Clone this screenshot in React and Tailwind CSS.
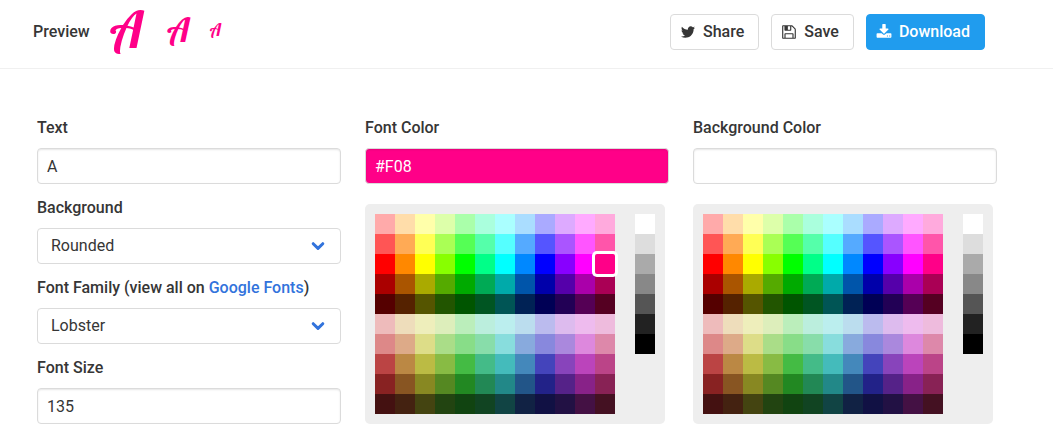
import { useState } from "react";

const HUES = [
  "FAA FDA FFA DFA AFA AFD AFF ADF AAF DAF FAF FAD",
  "F55 FA5 FF5 AF5 5F5 5FA 5FF 5AF 55F A5F F5F F5A",
  "F00 F80 FF0 8F0 0F0 0F8 0FF 08F 00F 80F F0F F08",
  "A00 A50 AA0 5A0 0A0 0A5 0AA 05A 00A 50A A0A A05",
  "500 520 550 250 050 052 055 025 005 205 505 502",
  "EBB EDB EEB DEB BEB BED BEE BDE BBE DBE EBE EBD",
  "D88 DA8 DD8 AD8 8D8 8DA 8DD 8AD 88D A8D D8D D8A",
  "B44 B84 BB4 8B4 4B4 4B8 4BB 48B 44B 84B B4B B48",
  "822 852 882 582 282 285 288 258 228 528 828 825",
  "411 421 441 241 141 142 144 124 114 214 414 412",
].flatMap((row) => row.split(" ").map((c) => "#" + c));

const GRAYS = ["#FFF", "#DDD", "#AAA", "#888", "#555", "#222", "#000"];

const ICONS = {
  twitter:
    "M1684 408q-67 98-162 167 1 14 1 42 0 130-38 259.5t-115.5 248.5-184.5 210.5-258 146-323 54.5q-271 0-496-145 35 4 78 4 225 0 401-138-105-2-188-64.5t-114-159.5q33 5 61 5 43 0 85-11-112-23-185.5-111.5t-73.5-205.5v-4q68 38 146 41-66-44-105-115t-39-154q0-88 44-163 121 149 294.5 238.5t371.5 99.5q-8-38-8-74 0-134 94.5-228.5t228.5-94.5q140 0 236 102 109-21 205-78-37 115-142 178 93-10 186-50z",
  save: "M512 1536h768v-384h-768v384zM1408 1536h128v-896q0-14-10-38.5t-20-34.5l-281-281q-10-10-34-20t-39-10v416q0 40-28 68t-68 28h-576q-40 0-68-28t-28-68v-416h-128v1280h128v-416q0-40 28-68t68-28h832q40 0 68 28t28 68v416zM1024 608v-320q0-13-9.500-22.500t-22.500-9.500h-192q-13 0-22.500 9.500t-9.500 22.500v320q0 13 9.500 22.500t22.500 9.500h192q13 0 22.500-9.500t9.500-22.500zM1664 640v928q0 40-28 68t-68 28h-1344q-40 0-68-28t-28-68v-1344q0-40 28-68t68-28h928q40 0 88 20t76 48l280 280q28 28 48 76t20 88z",
  download:
    "M1344 1344q0-26-19-45t-45-19-45 19-19 45 19 45 45 19 45-19 19-45zm256 0q0-26-19-45t-45-19-45 19-19 45 19 45 45 19 45-19 19-45zm128-224v320q0 40-28 68t-68 28h-1472q-40 0-68-28t-28-68v-320q0-40 28-68t68-28h465l135 136q58 56 136 56t136-56l136-136h464q40 0 68 28t28 68zm-325-569q17 41-14 70l-448 448q-18 19-45 19t-45-19l-448-448q-31-29-14-70 17-39 59-39h256v-448q0-26 19-45t45-19h256q26 0 45 19t19 45v448h256q42 0 59 39z",
};

function ActionButton({ icon, primary, children }) {
  const tone = primary
    ? "border-[#209cee] bg-[#209cee] text-white"
    : "border-[#dbdbdb] bg-white text-[#363636]";
  return (
    <button
      type="button"
      className={`flex h-9 items-center gap-[3px] rounded border pl-[5px] pr-3.5 font-medium ${tone}`}
    >
      <span className="flex w-6 justify-center">
        <svg viewBox="0 0 1792 1792" className="size-4 fill-current" aria-hidden="true">
          <path d={ICONS[icon]} />
        </svg>
      </span>
      {children}
    </button>
  );
}

const inputClass =
  "block h-9 w-full rounded border border-[#dbdbdb] px-[9px] shadow-[inset_0_1px_2px_rgba(10,10,10,0.1)] outline-none";

function Field({ id, label, children }) {
  return (
    <div>
      <label htmlFor={id} className="mb-2 block font-medium">
        {label}
      </label>
      {children}
    </div>
  );
}

function Select({ id, options }) {
  return (
    <div className="relative">
      <select
        id={id}
        className="block h-9 w-full appearance-none rounded border border-[#dbdbdb] bg-white pl-[13px] pr-10 outline-none"
      >
        {options.map((o) => (
          <option key={o}>{o}</option>
        ))}
      </select>
      <svg
        viewBox="0 0 14 10"
        className="pointer-events-none absolute right-4 top-[13px] h-2.5 w-3.5"
        aria-hidden="true"
      >
        <path
          d="M2.200 2.700 7 7.400 11.800 2.700"
          fill="none"
          stroke="#3273dc"
          strokeWidth="3"
          strokeLinecap="round"
          strokeLinejoin="round"
        />
      </svg>
    </div>
  );
}

function Swatch({ color, selected, onPick }) {
  return (
    <button
      type="button"
      aria-label={color}
      onClick={() => onPick(color)}
      className={
        selected
          ? "relative z-10 size-5 rounded-[2px] shadow-[0_0_0_3px_#fff]"
          : "size-5"
      }
      style={{ backgroundColor: color }}
    />
  );
}

function ColorField({ id, label, value, onChange }) {
  return (
    <div>
      <Field id={id} label={label}>
        <input
          id={id}
          className={`${inputClass} ${value ? "text-white" : ""}`}
          style={{ backgroundColor: value || "#fff" }}
          value={value}
          onChange={(e) => onChange(e.target.value)}
        />
      </Field>
      <div className="mt-5 flex w-fit items-start gap-5 rounded-[5px] bg-[#eee] p-2.5">
        <div className="grid grid-cols-12">
          {HUES.map((c) => (
            <Swatch key={c} color={c} selected={c === value} onPick={onChange} />
          ))}
        </div>
        <div className="grid">
          {GRAYS.map((c) => (
            <Swatch key={c} color={c} selected={c === value} onPick={onChange} />
          ))}
        </div>
      </div>
    </div>
  );
}

export default function App() {
  const [text, setText] = useState("A");
  const [size, setSize] = useState("135");
  const [fontColor, setFontColor] = useState("#F08");
  const [background, setBackground] = useState("");

  return (
    <div className="bg-white pb-6 font-['Roboto',sans-serif] text-base leading-6 text-[#363636]">
      <header className="flex items-center justify-between border-b border-[#f0f0f0] pb-[18px] pl-[33px] pr-[68px] pt-3.5">
        <div className="flex h-9 items-center">
          <span className="font-medium">Preview</span>
          <div
            className="mb-1 ml-5 flex items-center font-['Lobster','Liberation_Serif',serif]"
            style={{ color: fontColor }}
          >
            <span className="text-[50px] leading-9">{text}</span>
            <span className="ml-6 text-[34px] leading-9">{text}</span>
            <span className="ml-5 text-[17px] leading-9">{text}</span>
          </div>
        </div>
        <div className="flex gap-3">
          <ActionButton icon="twitter">Share</ActionButton>
          <ActionButton icon="save">Save</ActionButton>
          <ActionButton icon="download" primary>
            Download
          </ActionButton>
        </div>
      </header>

      <main className="grid grid-cols-3 gap-6 pl-[37px] pr-14 pt-[47px]">
        <div className="flex flex-col gap-3">
          <Field id="text" label="Text">
            <input
              id="text"
              className={inputClass}
              value={text}
              onChange={(e) => setText(e.target.value)}
            />
          </Field>
          <Field id="shape" label="Background">
            <Select id="shape" options={["Rounded", "Circle", "Square"]} />
          </Field>
          <Field
            id="family"
            label={
              <>
                Font Family (view all on{" "}
                <a href="https://fonts.google.com" className="text-[#3273dc]">
                  Google Fonts
                </a>
                )
              </>
            }
          >
            <Select id="family" options={["Lobster", "Roboto", "Leckerli One"]} />
          </Field>
          <Field id="size" label="Font Size">
            <input
              id="size"
              className={inputClass}
              value={size}
              onChange={(e) => setSize(e.target.value)}
            />
          </Field>
        </div>
        <ColorField
          id="font-color"
          label="Font Color"
          value={fontColor}
          onChange={setFontColor}
        />
        <ColorField
          id="background-color"
          label="Background Color"
          value={background}
          onChange={setBackground}
        />
      </main>
    </div>
  );
}
